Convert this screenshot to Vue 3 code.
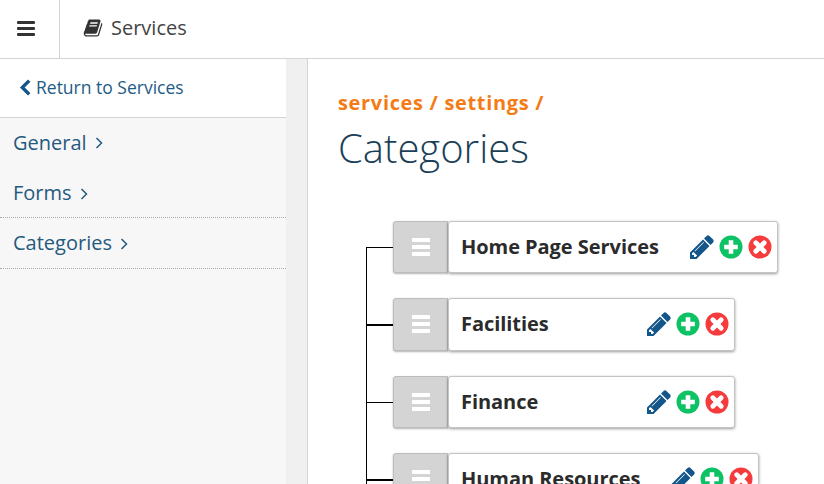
<script setup>
const nav = [
  { label: 'General', cls: 'first' },
  { label: 'Forms', cls: 'ruled' },
  { label: 'Categories', cls: 'ruled last' }
]
const categories = [
  { name: 'Home Page Services', width: 330 },
  { name: 'Facilities', width: 287 },
  { name: 'Finance', width: 287 },
  { name: 'Human Resources', width: 311 }
]
</script>

<template>
  <div class="page">
    <header class="top">
      <div class="menu-cell">
        <span class="burger"><i></i><i></i><i></i></span>
      </div>
      <div class="app-title">
        <svg class="book" viewBox="0 0 1792 1792"><path d="M1703 478q40 57 18 129l-275 906q-19 64-76.5 107.5t-122.5 43.5h-923q-77 0-148.5-53.5t-99.5-131.5q-24-67-2-127 0-4 3-27t4-37q1-8-3-21.5t-3-19.5q2-11 8-21t16.5-23.5 16.5-23.5q23-38 45-91.5t30-91.5q3-10 .5-30t-.5-28q3-11 17-28t17-23q21-36 42-92t25-90q1-9-2.5-32t.5-28q4-13 22-30.5t22-22.5q19-26 42.5-84.5t27.5-96.5q1-8-3-25.5t-2-26.5q2-8 9-18t18-23 17-21q8-12 16.5-30.5t15-35 16-36 19.5-32 26.5-23.5 36-11.5 47.5 5.5l-1 3q38-9 51-9h761q74 0 114 56t18 130l-274 906q-36 119-71.5 153.5t-128.5 34.5h-869q-27 0-38 15-11 16-1 43 24 70 144 70h923q29 0 56-15.5t35-41.5l300-987q7-22 5-57 38 15 59 43zm-1064 2q-4 13 2 22.5t20 9.5h608q13 0 25.5-9.5t16.5-22.5l21-64q4-13-2-22.5t-20-9.5h-608q-13 0-25.5 9.5t-16.5 22.5zm-83 256q-4 13 2 22.5t20 9.5h608q13 0 25.5-9.5t16.5-22.5l21-64q4-13-2-22.5t-20-9.5h-608q-13 0-25.5 9.5t-16.5 22.5z"/></svg>
        <span>Services</span>
      </div>
    </header>

    <div class="body">
      <aside class="side">
        <div class="side-main">
          <a class="back">
            <svg class="back-chev" viewBox="0 0 12 16"><path d="M9.500 1.500 3 8l6.500 6.500" /></svg>
            Return to Services
          </a>
          <nav class="side-nav">
            <a v-for="item in nav" :key="item.label" class="nav-item" :class="item.cls">
              {{ item.label }}
              <svg class="nav-chev" viewBox="0 0 8 12"><path d="M1.500 1 6.500 6l-5 5" /></svg>
            </a>
          </nav>
        </div>
        <div class="side-gutter"></div>
      </aside>

      <main class="content">
        <div class="crumbs">services / settings /</div>
        <h1>Categories</h1>
        <ul class="tree">
          <li v-for="cat in categories" :key="cat.name" class="row">
            <span class="branch"></span>
            <span class="handle"><i></i><i></i><i></i></span>
            <div class="card" :style="{ width: cat.width + 'px' }">
              <span class="name">{{ cat.name }}</span>
              <span class="actions">
                <svg class="pencil" viewBox="128 128 1536 1536"><path d="M491 1536l91-91-235-235-91 91v107h128v128h107zm523-928q0-22-22-22-10 0-17 7l-542 542q-7 7-7 17 0 22 22 22 10 0 17-7l542-542q7-7 7-17zm-54-192l416 416-832 832h-416v-416zm683 96q0 53-37 90l-166 166-416-416 166-165q36-38 90-38 53 0 91 38l235 234q37 39 37 91z"/></svg>
                <svg class="dot" viewBox="0 0 24 24"><circle cx="12" cy="12" r="11.500" fill="#0cc265"/><path d="M12 5.200v13.600M5.200 12h13.600" stroke="#fff" stroke-width="4.600" fill="none"/></svg>
                <svg class="dot" viewBox="0 0 24 24"><circle cx="12" cy="12" r="11.500" fill="#f53b3b"/><path d="M7.800 7.800l8.400 8.400M16.200 7.800l-8.400 8.400" stroke="#fff" stroke-width="4.800" stroke-linecap="round" fill="none"/></svg>
              </span>
            </div>
          </li>
        </ul>
      </main>
    </div>
  </div>
</template>

<style>
html, body { margin: 0; background: #fff; overflow: hidden; }
</style>

<style scoped>
.page {
  width: 824px;
  height: 484px;
  overflow: hidden;
  font-family: "Open Sans", "Noto Sans", sans-serif;
  background: #fff;
}
.top {
  height: 58px;
  display: flex;
  border-bottom: 1px solid #d4d4d4;
}
.menu-cell {
  width: 59px;
  border-right: 1px solid #d4d4d4;
  display: flex;
  align-items: center;
  justify-content: center;
  padding-bottom: 2px;
  box-sizing: content-box;
}
.burger { display: flex; flex-direction: column; gap: 3px; width: 18px; margin-right: 7px; }
.burger i { display: block; height: 3px; background: #333; border-radius: 1px; }
.app-title {
  display: flex;
  align-items: center;
  padding: 0 0 3px 23px;
  gap: 8px;
  font-size: 20px;
  color: #444;
}
.book { width: 20px; height: 20px; fill: #333; }
.body { display: flex; height: 425px; }
.side {
  width: 307px;
  display: flex;
  border-right: 1px solid #d4d4d4;
  flex: none;
}
.side-main { width: 286px; background: #f7f7f7; }
.side-gutter { flex: 1; background: #f0f0f0; }
.back {
  box-sizing: border-box;
  height: 59px;
  background: #fff;
  border-bottom: 1px solid #d4d4d4;
  display: flex;
  align-items: center;
  padding: 0 0 2px 19px;
  gap: 4px;
  font-size: 17.500px;
  color: #1d5c85;
}
.back-chev { width: 13px; height: 17px; fill: none; stroke: #13568a; stroke-width: 3.200; }
.side-nav { display: flex; flex-direction: column; }
.nav-item {
  height: 50px;
  box-sizing: border-box;
  padding: 0 0 0 13px;
  display: flex;
  align-items: center;
  gap: 8px;
  font-size: 20px;
  color: #25597e;
}
.nav-item.first { padding-bottom: 2px; }
.nav-item.ruled { border-bottom: 1px dotted #aaa; }
.nav-item.last { height: 51px; padding-bottom: 1px; }
.nav-chev { width: 8px; height: 12px; fill: none; stroke: #25597e; stroke-width: 1.500; margin-top: 2px; }
.content { flex: 1; padding: 30px 0 0 30px; min-width: 0; }
.crumbs {
  font-size: 20px;
  line-height: 27px;
  font-weight: 700;
  letter-spacing: .670px;
  color: #f47b16;
}
h1 {
  margin: 5px 0 0;
  font-size: 40px;
  line-height: 54px;
  font-weight: 300;
  color: #1c3f58;
}
.tree {
  list-style: none;
  margin: 45.500px 0 0 28px;
  padding: 0;
  position: relative;
}
.tree::before {
  content: "";
  position: absolute;
  left: 0;
  top: 26px;
  bottom: -30px;
  width: 1px;
  background: #000;
}
.row {
  display: flex;
  align-items: flex-start;
  height: 52.500px;
  margin-bottom: 25px;
}
.branch {
  width: 27px;
  height: 1.500px;
  margin-top: 26.100px;
  background: #000;
  flex: none;
}
.handle {
  width: 55px;
  height: 52.500px;
  box-sizing: border-box;
  flex: none;
  background: #d4d4d4;
  border: 1px solid #bcbcbc;
  border-radius: 3px 0 0 3px;
  box-shadow: 0 1px 2px rgba(0, 0, 0, .3);
  display: flex;
  flex-direction: column;
  align-items: center;
  justify-content: center;
  gap: 3px;
}
.handle i { display: block; width: 18px; height: 4px; background: #fff; }
.card {
  height: 52.500px;
  box-sizing: border-box;
  flex: none;
  background: #fff;
  border: 1px solid #c4c4c4;
  border-radius: 3px;
  box-shadow: 0 1px 3px rgba(0, 0, 0, .4);
  display: flex;
  align-items: center;
  padding: 0 5px 0 12px;
}
.name { font-size: 20px; font-weight: 700; color: #2b2b2b; white-space: nowrap; margin-bottom: .6px; letter-spacing: -.05px; }
.actions { margin-left: auto; display: flex; align-items: center; gap: 5px; }
.pencil { width: 24px; height: 24px; fill: #13568a; }
.dot { width: 24px; height: 24px; }
</style>
